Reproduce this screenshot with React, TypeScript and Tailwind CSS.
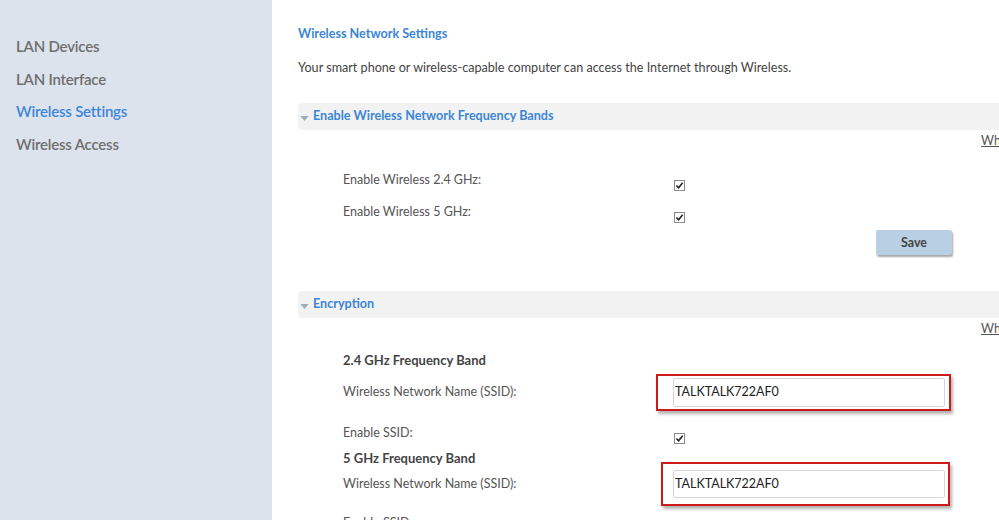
import React from 'react'

const navItems = [
  { label: 'LAN Devices', active: false },
  { label: 'LAN Interface', active: false },
  { label: 'Wireless Settings', active: true },
  { label: 'Wireless Access', active: false },
]

const redBox = 'absolute border-2 border-[#cc1a1a] shadow-[2px_3px_3px_rgba(0,0,0,0.3)]'

function Check() {
  return (
    <span className="flex h-[11px] w-[11px] items-center justify-center border border-[#8a8a8a] bg-white">
      <svg viewBox="0 0 10 10" className="h-[9px] w-[9px]">
        <path d="M1.5 5 L4 7.5 L8.5 2" fill="none" stroke="#222" strokeWidth="1.8" />
      </svg>
    </span>
  )
}

function SectionBar({ title }: { title: string }) {
  return (
    <div className="flex h-[27px] items-center rounded-l-[4px] bg-[#f2f2f2] pl-[2px]">
      <svg viewBox="0 0 10 6" className="mt-[3px] h-[5px] w-[9px]">
        <path d="M0 0 L10 0 L5 6 Z" fill="#9fadb8" />
      </svg>
      <span className="ml-[4px] whitespace-nowrap text-[12.6px] font-bold text-[#3b86d6]">{title}</span>
    </div>
  )
}

function WhatsThis() {
  return (
    <div className="h-[16px] whitespace-nowrap pl-[683px] text-[12.5px] leading-[16px] text-[#555]">
      <span className="underline">What's this?</span>
    </div>
  )
}

function SsidInput({ box }: { box: 'first' | 'second' }) {
  return (
    <div className="relative h-full w-[272px]">
      {box === 'first' ? (
        <div className={`${redBox} -bottom-[4px] -left-[17px] -right-[6px] -top-[4px]`} />
      ) : (
        <div className={`${redBox} -bottom-[8px] -left-[12px] -right-[5px] -top-[8px]`} />
      )}
      <div className="relative flex h-full items-center rounded-[2px] border border-[#d4d4d4] bg-white pl-[1px] text-[12.5px] text-[#222]">
        TALKTALK722AF0
      </div>
    </div>
  )
}

export default function App() {
  return (
    <div className="flex h-[520px] w-[999px] overflow-hidden bg-white font-['Lato',sans-serif]">
      <aside className="w-[272px] shrink-0 bg-[#dce3ed] pl-[16px] pt-[37px]">
        {navItems.map(item => (
          <div
            key={item.label}
            className={`h-[32.5px] text-[15px] leading-[18px] tracking-[-0.2px] font-semibold ${item.active ? 'text-[#3d86d8]' : 'text-[#6e6e6e]'}`}
          >
            {item.label}
          </div>
        ))}
      </aside>

      <main className="min-w-0 flex-1 overflow-hidden pl-[26px] pt-[26px]">
        <h1 className="whitespace-nowrap text-[12.6px] font-bold leading-[16px] text-[#3b86d6]">Wireless Network Settings</h1>
        <p className="mt-[18px] whitespace-nowrap text-[12.6px] leading-[16px] text-[#444]">
          Your smart phone or wireless-capable computer can access the Internet through Wireless.
        </p>

        <div className="mt-[27px]">
          <SectionBar title="Enable Wireless Network Frequency Bands" />
        </div>
        <div className="mt-[3px]">
          <WhatsThis />
        </div>

        <div className="mt-[15px] pl-[45px] text-[12.5px] text-[#555]">
          <div className="flex h-[32px] items-center">
            <span className="w-[331px]">Enable Wireless 2.4 GHz:</span>
            <span className="mt-[10px]"><Check /></span>
          </div>
          <div className="flex h-[32px] items-center">
            <span className="w-[331px]">Enable Wireless 5 GHz:</span>
            <span className="mt-[10px]"><Check /></span>
          </div>
        </div>

        <div className="mt-[1px] pl-[578px]">
          <button className="h-[25px] w-[76px] rounded-[2px] bg-[#b9cfe3] text-[12.5px] font-bold leading-[25px] text-[#444] shadow-[1px_2px_2px_rgba(0,0,0,0.35)]">
            Save
          </button>
        </div>

        <div className="mt-[36px]">
          <SectionBar title="Encryption" />
        </div>
        <div className="mt-[3px]">
          <WhatsThis />
        </div>

        <div className="pl-[45px] text-[12.5px] text-[#555]">
          <div className="mt-[15px] h-[16px] font-bold leading-[16px] text-[13px] text-[#444]">2.4 GHz Frequency Band</div>
          <div className="mt-[10px] flex h-[29px] items-center">
            <span className="w-[330px]">Wireless Network Name (SSID):</span>
            <SsidInput box="first" />
          </div>
          <div className="mt-[18px] flex h-[16px] items-center">
            <span className="w-[331px]">Enable SSID:</span>
            <span className="mt-[10px]"><Check /></span>
          </div>
          <div className="mt-[9px] h-[16px] font-bold leading-[16px] text-[13px] text-[#444]">5 GHz Frequency Band</div>
          <div className="mt-[4px] flex h-[28px] items-center">
            <span className="w-[330px]">Wireless Network Name (SSID):</span>
            <SsidInput box="second" />
          </div>
          <div className="mt-[17px] flex h-[16px] items-center">
            <span className="w-[331px]">Enable SSID:</span>
          </div>
        </div>
      </main>
    </div>
  )
}
